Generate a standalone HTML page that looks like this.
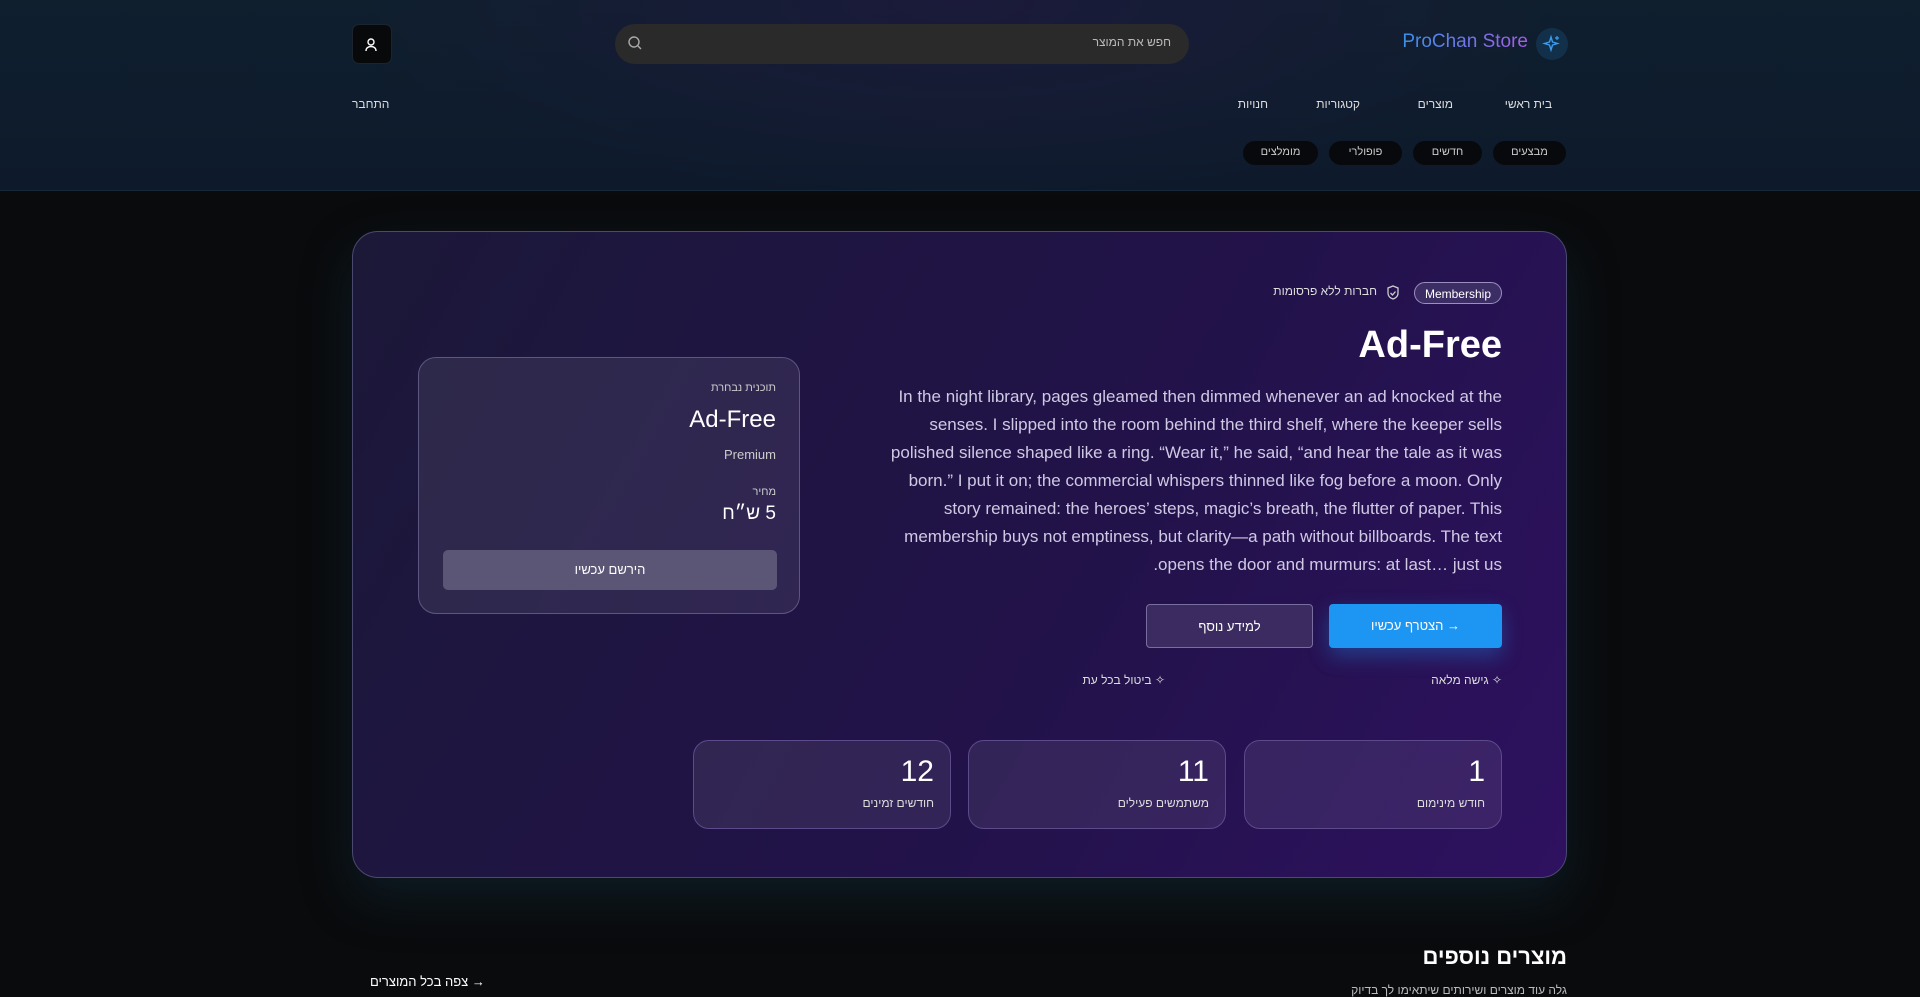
<!DOCTYPE html>
<html lang="he" dir="rtl"><head><meta charset="utf-8">
<style>
*{box-sizing:border-box;margin:0;padding:0}
body{width:1920px;height:993px;overflow:hidden;background:#0a0b0d;font-family:"Liberation Sans","DejaVu Sans",sans-serif;color:#fff;position:relative}
.abs{position:absolute}
header{position:absolute;left:0;top:0;width:1920px;height:191px;background:radial-gradient(ellipse 600px 200px at 960px 0,#1b1a3a,transparent),linear-gradient(180deg,#0f1f2e,#0e1a2c);border-bottom:1px solid #16283a}
.user{left:352px;top:24px;width:40px;height:40px;background:#08090b;border-radius:7px;border:1px solid #1c2430}
.search{left:615px;top:24px;width:574px;height:40px;background:#2a2a2a;border-radius:20px}
.search span{position:absolute;right:18px;top:11px;font-size:12px;color:#bbb}
.brand{right:392px;top:31px;font-size:19px;background:linear-gradient(90deg,#3b90e6,#a55ce6);-webkit-background-clip:text;color:transparent}
.bicon{left:1536px;top:28px;width:32px;height:32px;border-radius:50%;background:#13304a}
.nav{top:97px;font-size:12px;color:#ddd}
.chip{top:141px;height:24px;border-radius:12px;background:#08090c;font-size:11px;color:#ccc;padding-top:5px;text-align:center}
.card{left:352px;top:231px;width:1215px;height:647px;border-radius:26px;border:1px solid #4a4a70;background:linear-gradient(120deg,#1b1838 0%,#22124a 60%,#2e1160 100%);box-shadow:0 20px 50px rgba(20,60,80,.35)}
.p{right:418px;top:383px;font-size:17px;line-height:28px;color:#cfc9e4;text-align:right;direction:ltr;white-space:nowrap}
.side{left:418px;top:357px;width:382px;height:257px;border-radius:18px;border:1px solid #5c5780;background:rgba(255,255,255,.08)}
.stat{top:740px;width:258px;height:89px;border-radius:16px;border:1px solid #5d4a8a;background:rgba(255,255,255,.08)}
.stat b{position:absolute;right:16px;top:14px;font-size:30px;font-weight:normal}
.stat i{position:absolute;right:16px;top:55px;font-size:12px;font-style:normal;color:#ddd}
</style></head><body>
<header>
<div class="abs user"><svg width="40" height="40" viewBox="0 0 40 40"><circle cx="20" cy="17" r="3" fill="none" stroke="#fff" stroke-width="1.4"/><path d="M15 26c0-3 2-4.5 5-4.5s5 1.5 5 4.5" fill="none" stroke="#fff" stroke-width="1.4"/></svg></div>
<div class="abs search"><svg class="abs" style="left:11px;top:10px" width="18" height="18" viewBox="0 0 18 18"><circle cx="8" cy="8" r="5" fill="none" stroke="#aaa" stroke-width="1.4"/><path d="M12 12l3 3" stroke="#aaa" stroke-width="1.4"/></svg><span>חפש את המוצר</span></div>
<div class="abs brand">ProChan Store</div>
<div class="abs bicon"><svg width="32" height="32" viewBox="0 0 32 32"><path d="M15 9l1.5 5 5 1.5-5 1.5-1.5 5-1.5-5-5-1.5 5-1.5z" fill="none" stroke="#3b9cf0" stroke-width="1.4"/><path d="M21 8v4M19 10h4" stroke="#3b9cf0" stroke-width="1.2"/></svg></div>
<div class="abs nav" style="right:368px">בית ראשי</div>
<div class="abs nav" style="right:467px">מוצרים</div>
<div class="abs nav" style="right:560px">קטגוריות</div>
<div class="abs nav" style="right:652px">חנויות</div>
<div class="abs nav" style="left:352px">התחבר</div>
<div class="abs chip" style="right:354px;width:73px">מבצעים</div>
<div class="abs chip" style="right:438px;width:69px">חדשים</div>
<div class="abs chip" style="right:518px;width:73px">פופולרי</div>
<div class="abs chip" style="right:602px;width:75px">מומלצים</div>
</header>

<div class="abs card"></div>
<div class="abs" style="right:418px;top:282px;height:22px;border-radius:11px;border:1px solid #9a8fc0;background:#3c2e64;font-size:12px;padding:4px 10px;direction:ltr">Membership</div>
<svg class="abs" style="left:1385px;top:284px" width="16" height="18" viewBox="0 0 16 18"><path d="M8 2l5 2v5c0 3-2 5-5 6-3-1-5-3-5-6V4z" fill="none" stroke="#ccc" stroke-width="1.3"/><path d="M5.5 9l2 2 3-3.5" fill="none" stroke="#ccc" stroke-width="1.3"/></svg>
<div class="abs" style="right:543px;top:284px;font-size:12px;color:#ddd">חברות ללא פרסומות</div>
<div class="abs" style="right:418px;top:324px;font-size:38px;font-weight:bold;direction:ltr">Ad-Free</div>
<div class="abs p">In the night library, pages gleamed then dimmed whenever an ad knocked at the<br>senses. I slipped into the room behind the third shelf, where the keeper sells<br>polished silence shaped like a ring. “Wear it,” he said, “and hear the tale as it was<br>born.” I put it on; the commercial whispers thinned like fog before a moon. Only<br>story remained: the heroes’ steps, magic’s breath, the flutter of paper. This<br>membership buys not emptiness, but clarity—a path without billboards. The text<br>.opens the door and murmurs: at last… just us</div>
<div class="abs" style="left:1329px;top:604px;width:173px;height:44px;border-radius:4px;background:#1d95f2;box-shadow:0 8px 20px rgba(30,140,240,.35);font-size:13px;text-align:center;padding-top:14px">→ הצטרף עכשיו</div>
<div class="abs" style="left:1146px;top:604px;width:167px;height:44px;border-radius:4px;border:1px solid #7a6ea0;background:#3b2b60;font-size:13px;text-align:center;padding-top:14px">למידע נוסף</div>
<div class="abs" style="right:418px;top:673px;font-size:12px;color:#ddd">✧ גישה מלאה</div>
<div class="abs" style="right:755px;top:673px;font-size:12px;color:#ddd">✧ ביטול בכל עת</div>

<div class="abs side">
<div class="abs" style="right:23px;top:24px;font-size:11px;color:#ccc">תוכנית נבחרת</div>
<div class="abs" style="right:23px;top:48px;font-size:24px;direction:ltr">Ad-Free</div>
<div class="abs" style="right:23px;top:89px;font-size:13px;color:#ccc;direction:ltr">Premium</div>
<div class="abs" style="right:23px;top:128px;font-size:11px;color:#ccc">מחיר</div>
<div class="abs" style="right:23px;top:145px;font-size:19px">5 ש״ח</div>
<div class="abs" style="left:24px;top:192px;width:334px;height:40px;border-radius:5px;background:#5c5676;font-size:13px;text-align:center;padding-top:12px">הירשם עכשיו</div>
</div>

<div class="abs stat" style="left:1244px"><b>1</b><i>חודש מינימום</i></div>
<div class="abs stat" style="left:968px"><b>11</b><i>משתמשים פעילים</i></div>
<div class="abs stat" style="left:693px"><b>12</b><i>חודשים זמינים</i></div>

<div class="abs" style="right:353px;top:944px;font-size:22px;font-weight:bold">מוצרים נוספים</div>
<div class="abs" style="right:353px;top:983px;font-size:12px;color:#bbb">גלה עוד מוצרים ושירותים שיתאימו לך בדיוק</div>
<div class="abs" style="left:370px;top:974px;font-size:13px">→ צפה בכל המוצרים</div>
</body></html>
